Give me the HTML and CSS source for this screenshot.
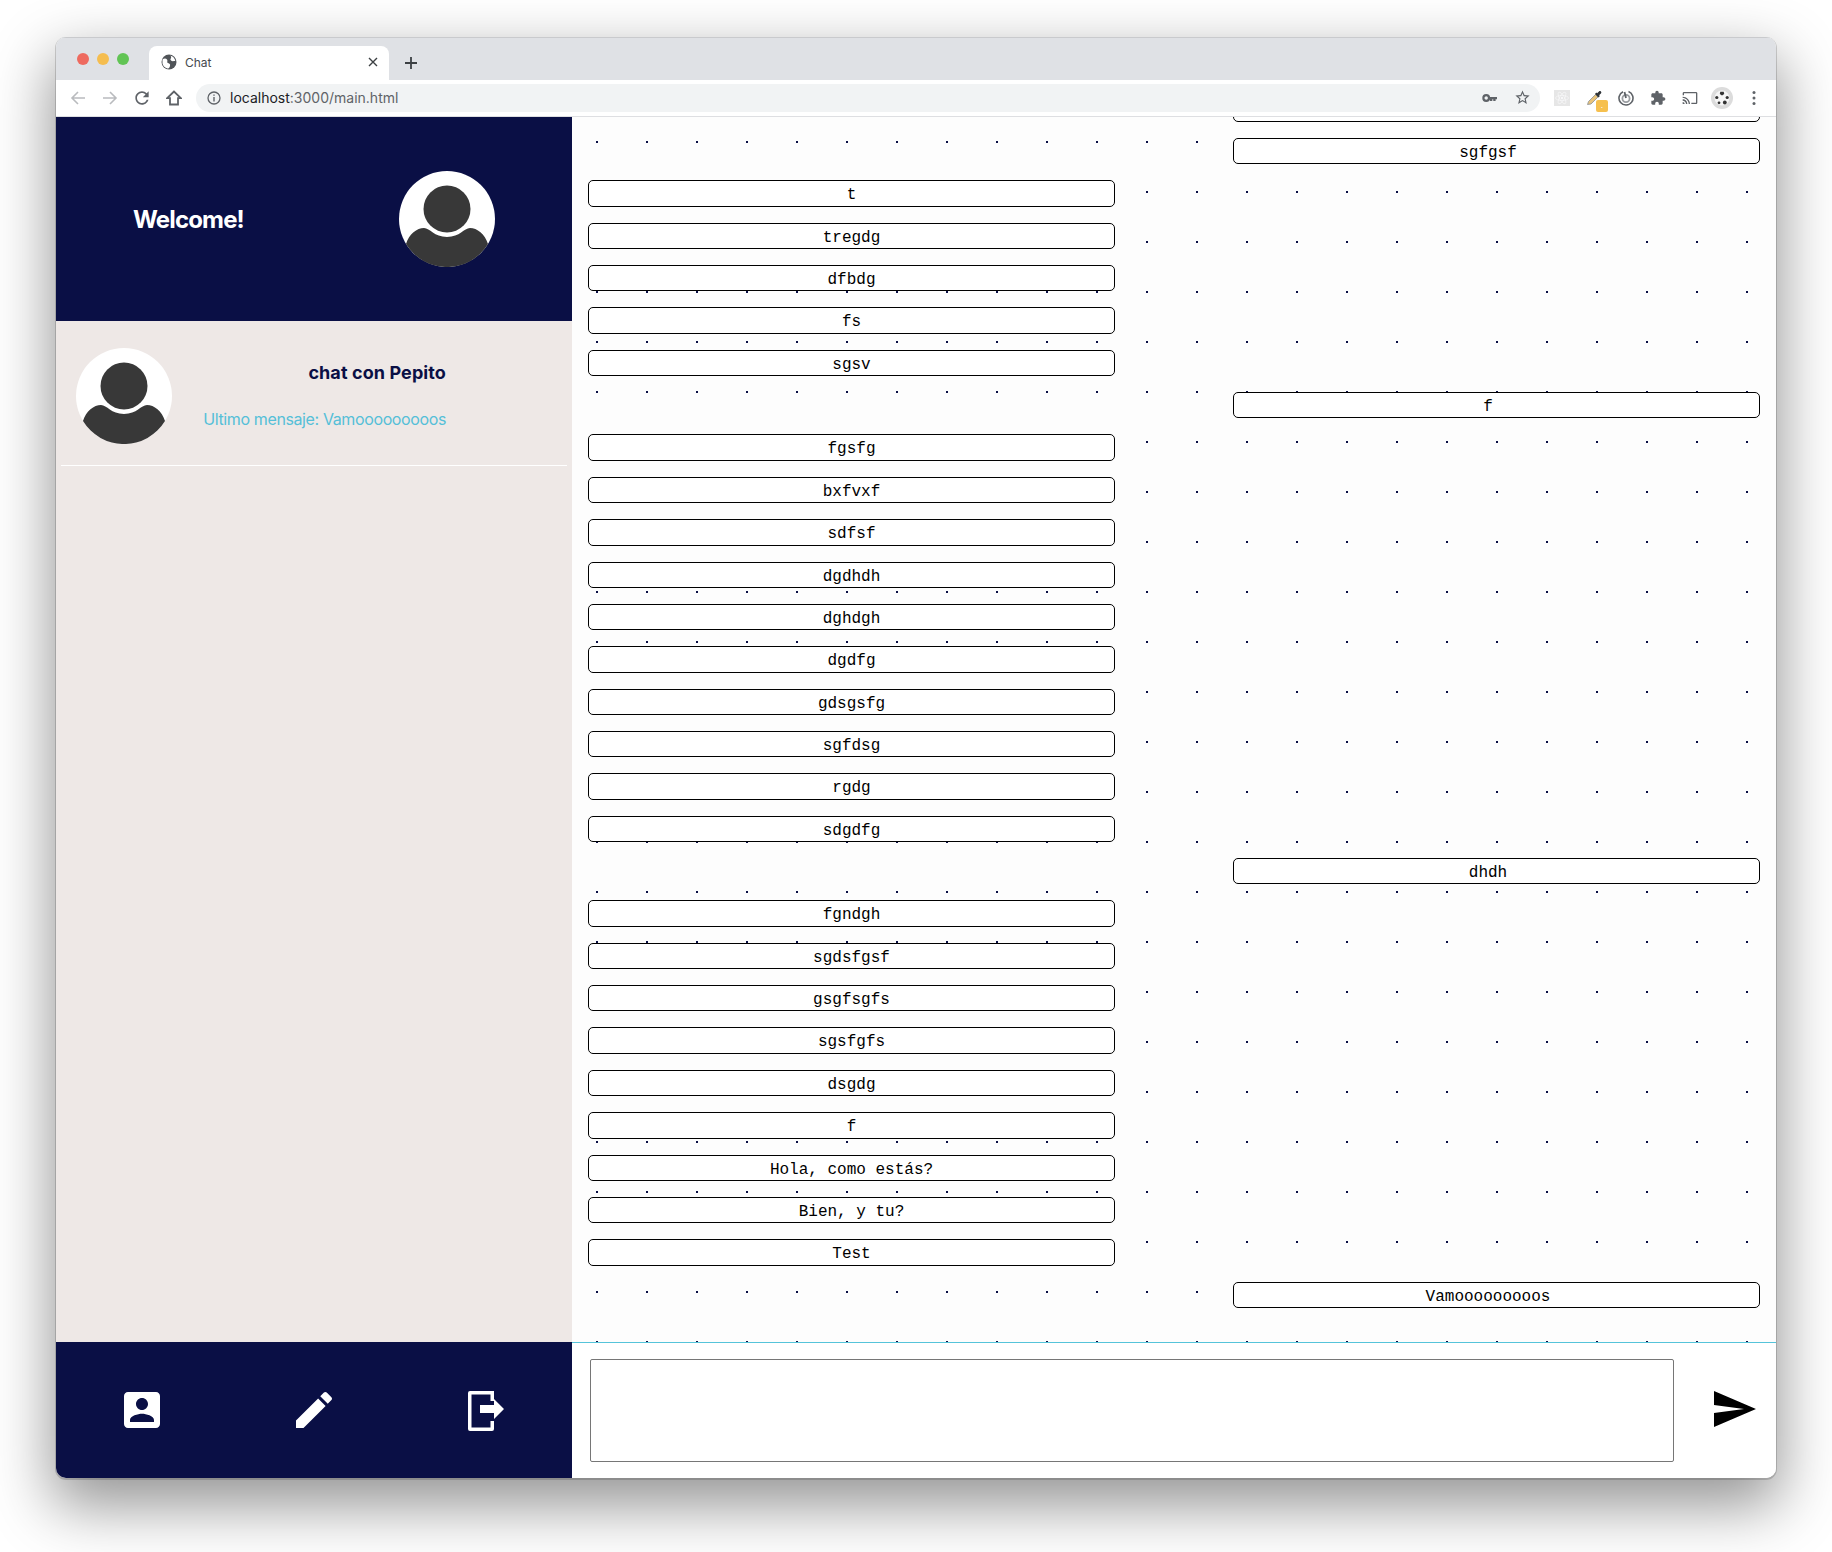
FILE: index.html
```html
<!DOCTYPE html>
<html lang="es">
<head>
<meta charset="utf-8">
<title>Chat</title>
<link rel="stylesheet" href="styles.css">
</head>
<body>
<div class="window">
  <div class="tabstrip">
    <div class="lights"><span class="light red"></span><span class="light yellow"></span><span class="light green"></span></div>
    <div class="tab">
      <svg class="favicon" viewBox="0 0 16 16"><circle cx="8" cy="8" r="7.500" fill="#505458"/><path d="M1.500 5.500C3 4 5 4 6 5.500s-.5 3 1 3.500 2.500 1 2 3-1.500 2.500-2.500 2.500C4 14 2 12 1.500 9.500zM9 1.500c1 .5 1.500 1.500 1 2.500S9 5.500 10 6.500s2.500.5 4.300.5C14 4.500 12 2 9 1.500z" fill="#fff"/></svg>
      <span class="tab-title">Chat</span>
      <svg class="tab-close" viewBox="0 0 10 10"><path d="M1 1l8 8M9 1l-8 8" stroke="#3c4043" stroke-width="1.4" fill="none"/></svg>
    </div>
    <svg class="newtab" viewBox="0 0 12 12"><path d="M6 0v12M0 6h12" stroke="#3c4043" stroke-width="1.8" fill="none"/></svg>
  </div>
  <div class="toolbar">
    <svg class="tb-icon" viewBox="0 0 16 16"><path d="M15 8H2M8 2L2 8l6 6" stroke="#b9bbbe" stroke-width="1.6" fill="none"/></svg>
    <svg class="tb-icon" viewBox="0 0 16 16"><path d="M1 8h13M8 2l6 6-6 6" stroke="#b9bbbe" stroke-width="1.6" fill="none"/></svg>
    <svg class="tb-icon" viewBox="0 0 24 24"><path fill="#5f6368" d="M17.65 6.35C16.2 4.9 14.21 4 12 4c-4.42 0-7.99 3.58-7.99 8s3.57 8 7.99 8c3.73 0 6.84-2.55 7.73-6h-2.08c-.82 2.33-3.04 4-5.65 4-3.31 0-6-2.69-6-6s2.69-6 6-6c1.66 0 3.14.69 4.22 1.78L13 11h7V4l-2.35 2.35z"/></svg>
    <svg class="tb-icon" viewBox="0 0 16 16"><path d="M8 1.5L1.2 8.200H4v6.300h8V8.200h2.800z" stroke="#5f6368" stroke-width="1.800" fill="none"/></svg>
    <div class="omnibox">
      <svg class="info" viewBox="0 0 14 14"><circle cx="7" cy="7" r="6" fill="none" stroke="#5f6368" stroke-width="1.3"/><path d="M7 6v4.5M7 3.4v1.4" stroke="#5f6368" stroke-width="1.4"/></svg>
      <span class="url"><span class="url-host">localhost</span>:3000/main.html</span>
      <span class="omni-space"></span>
      <svg class="omni-key" viewBox="0 0 16 10"><circle cx="4.5" cy="5" r="3" fill="none" stroke="#5f6368" stroke-width="2.4"/><path d="M7 3.8h9v2.4h-1.5v2H12v-2h-1v2H8.5V6.2H7z" fill="#5f6368"/></svg>
      <svg class="omni-star" viewBox="0 0 24 24"><path fill="#5f6368" d="M22 9.24l-7.19-.62L12 2 9.19 8.63 2 9.24l5.46 4.73L5.82 21 12 17.27 18.18 21l-1.63-7.03L22 9.24zM12 15.4l-3.76 2.27 1-4.28-3.32-2.88 4.38-.38L12 6.1l1.71 4.04 4.38.38-3.32 2.88 1 4.28L12 15.4z"/></svg>
    </div>
    <div class="ext ext-react">
      <svg viewBox="0 0 16 16"><g fill="none" stroke="#f7f7f8" stroke-width=".7"><ellipse cx="8" cy="8" rx="6.5" ry="2.5"/><ellipse cx="8" cy="8" rx="6.5" ry="2.5" transform="rotate(60 8 8)"/><ellipse cx="8" cy="8" rx="6.5" ry="2.5" transform="rotate(120 8 8)"/></g><circle cx="8" cy="8" r="1.2" fill="#f7f7f8"/></svg>
    </div>
    <div class="ext ext-drop">
      <svg viewBox="0 0 16 16"><path d="M.5 14.500l1-3L8.500 4.500l2.500 2.500-7 7z" fill="#e8c37a" stroke="#8a8f96" stroke-width=".8"/><path d="M8 4l3.500 3.500 1.400-1.400-.8-.8 1.800-1.900c.6-.6.6-1.300 0-1.900s-1.300-.6-1.900 0l-1.900 1.800-.8-.8z" fill="#2f3337"/></svg>
      <span class="ext-badge">.</span>
    </div>
    <div class="ext ext-radar">
      <svg viewBox="0 0 16 16"><path d="M10.500 1.500A7 7 0 1 1 5 1.700" fill="none" stroke="#5f6368" stroke-width="1.600"/><circle cx="8" cy="8.500" r="3.600" fill="none" stroke="#9a9da1" stroke-width="1.800"/><path d="M6.500 2l1.500 6" stroke="#5f6368" stroke-width="1.800"/></svg>
    </div>
    <div class="ext">
      <svg viewBox="0 0 24 24"><path fill="#5f6368" d="M20.500 11H19V7c0-1.100-.9-2-2-2h-4V3.500C13 2.120 11.880 1 10.500 1S8 2.120 8 3.500V5H4c-1.100 0-1.990.9-1.990 2v3.800H3.500c1.490 0 2.700 1.210 2.700 2.700s-1.210 2.700-2.700 2.700H2V20c0 1.100.9 2 2 2h3.800v-1.500c0-1.490 1.210-2.700 2.700-2.700 1.490 0 2.700 1.210 2.700 2.700V22H17c1.100 0 2-.9 2-2v-4h1.500c1.380 0 2.500-1.120 2.500-2.500S21.880 11 20.500 11z"/></svg>
    </div>
    <div class="ext">
      <svg viewBox="0 0 24 24"><path fill="#5f6368" d="M21 3H3c-1.100 0-2 .9-2 2v3h2V5h18v14h-7v2h7c1.100 0 2-.9 2-2V5c0-1.100-.9-2-2-2zM1 18v3h3c0-1.660-1.340-3-3-3zm0-4v2c2.760 0 5 2.240 5 5h2c0-3.870-3.130-7-7-7zm0-4v2c4.970 0 9 4.030 9 9h2c0-6.080-4.930-11-11-11z"/></svg>
    </div>
    <div class="profile">
      <svg viewBox="0 0 16 16"><circle cx="8" cy="8" r="7.500" fill="#f6f6f6"/><path d="M6.300 1.800h3.400l.5 2.200-2.200 1.500L5.800 4z" fill="#333"/><circle cx="2.800" cy="7.500" r="1.600" fill="#333"/><circle cx="13.200" cy="7.500" r="1.600" fill="#333"/><circle cx="5" cy="12.800" r="1.400" fill="#333"/><circle cx="10.800" cy="12.500" r="1.900" fill="#333"/></svg>
    </div>
    <svg class="kebab" viewBox="0 0 4 16"><circle cx="2" cy="2.500" r="1.500" fill="#5f6368"/><circle cx="2" cy="8" r="1.500" fill="#5f6368"/><circle cx="2" cy="13.500" r="1.500" fill="#5f6368"/></svg>
  </div>

  <div class="app">
    <aside class="sidebar">
      <header class="side-head">
        <h1 class="welcome">Welcome!</h1>
        <svg class="avatar" viewBox="0 0 96 96"><circle cx="48" cy="48" r="48" fill="#fff"/><circle cx="48" cy="38" r="23.500" fill="#383838"/><path d="M7 73c3-10 11-16 18-16 6 0 10 9 23 9s17-9 23-9c7 0 15 6 18 16A48 48 0 0 1 7 73z" fill="#383838"/></svg>
      </header>
      <div class="side-list">
        <div class="chat-item">
          <svg class="avatar" viewBox="0 0 96 96"><circle cx="48" cy="48" r="48" fill="#fff"/><circle cx="48" cy="38" r="23.500" fill="#383838"/><path d="M7 73c3-10 11-16 18-16 6 0 10 9 23 9s17-9 23-9c7 0 15 6 18 16A48 48 0 0 1 7 73z" fill="#383838"/></svg>
          <div class="chat-text">
            <div class="chat-name">chat con Pepito</div>
            <div class="chat-last">Ultimo mensaje: Vamooooooooos</div>
          </div>
        </div>
      </div>
      <footer class="side-foot">
        <svg class="foot-icon" viewBox="0 0 24 24"><path fill="#fff" d="M3 5v14c0 1.100.89 2 2 2h14c1.100 0 2-.9 2-2V5c0-1.100-.9-2-2-2H5c-1.110 0-2 .9-2 2zm12 4c0 1.660-1.340 3-3 3s-3-1.340-3-3 1.340-3 3-3 3 1.340 3 3zm-9 8c0-2 4-3.100 6-3.100s6 1.100 6 3.100v1H6v-1z"/></svg>
        <svg class="foot-icon" viewBox="0 0 24 24"><path fill="#fff" d="M3 17.250V21h3.750L17.810 9.940l-3.750-3.750L3 17.250zM20.710 7.040c.39-.39.39-1.020 0-1.410l-2.340-2.340c-.39-.39-1.020-.39-1.410 0l-1.830 1.830 3.750 3.750 1.830-1.830z"/></svg>
        <svg class="foot-icon" viewBox="0 0 48 48"><path fill="#fff" d="M8 6a2 2 0 0 0-2 2v36a2 2 0 0 0 2 2h22a2 2 0 0 0 2-2v-8h-3.500v6.500h-19v-33h19V16H32V6zM18 20h14v-6l10 10-10 10v-6H18z" transform="translate(0 -1)"/></svg>
      </footer>
    </aside>
    <main class="chat">
      <div class="messages">
        <div class="msg mine"><span class="bubble"></span></div>
        <div class="msg mine"><span class="bubble">sgfgsf</span></div>
        <div class="msg"><span class="bubble">t</span></div>
        <div class="msg"><span class="bubble">tregdg</span></div>
        <div class="msg"><span class="bubble">dfbdg</span></div>
        <div class="msg"><span class="bubble">fs</span></div>
        <div class="msg"><span class="bubble">sgsv</span></div>
        <div class="msg mine"><span class="bubble">f</span></div>
        <div class="msg"><span class="bubble">fgsfg</span></div>
        <div class="msg"><span class="bubble">bxfvxf</span></div>
        <div class="msg"><span class="bubble">sdfsf</span></div>
        <div class="msg"><span class="bubble">dgdhdh</span></div>
        <div class="msg"><span class="bubble">dghdgh</span></div>
        <div class="msg"><span class="bubble">dgdfg</span></div>
        <div class="msg"><span class="bubble">gdsgsfg</span></div>
        <div class="msg"><span class="bubble">sgfdsg</span></div>
        <div class="msg"><span class="bubble">rgdg</span></div>
        <div class="msg"><span class="bubble">sdgdfg</span></div>
        <div class="msg mine"><span class="bubble">dhdh</span></div>
        <div class="msg"><span class="bubble">fgndgh</span></div>
        <div class="msg"><span class="bubble">sgdsfgsf</span></div>
        <div class="msg"><span class="bubble">gsgfsgfs</span></div>
        <div class="msg"><span class="bubble">sgsfgfs</span></div>
        <div class="msg"><span class="bubble">dsgdg</span></div>
        <div class="msg"><span class="bubble">f</span></div>
        <div class="msg"><span class="bubble">Hola, como estás?</span></div>
        <div class="msg"><span class="bubble">Bien, y tu?</span></div>
        <div class="msg"><span class="bubble">Test</span></div>
        <div class="msg mine"><span class="bubble">Vamooooooooos</span></div>
      </div>
      <div class="composer">
        <textarea class="input"></textarea>
        <svg class="send" viewBox="0 0 24 24"><path fill="#000" d="M2.010 21L23 12 2.010 3 2 10l15 2-15 2z"/></svg>
      </div>
    </main>
  </div>
</div>
</body>
</html>
```

FILE: styles.css
```css
* { box-sizing: border-box; }
html, body { margin: 0; height: 100%; }
body {
  width: 1832px;
  height: 1552px;
  background: #fff;
  padding: 37px 56px 0;
  overflow: hidden;
  font-family: "Inter", "Liberation Sans", sans-serif;
}
.window {
  width: 1720px;
  height: 1441px;
  border-radius: 10px;
  overflow: hidden;
  display: flex;
  flex-direction: column;
  background: #fff;
  box-shadow: 0 1px 0 1px rgba(0,0,0,.16), 0 24px 60px 4px rgba(0,0,0,.42);
}

.tabstrip {
  height: 43px;
  flex: none;
  background: #dfe1e5;
  border-top: 1px solid #c9cacd;
  display: flex;
  align-items: flex-end;
}
.lights { width: 93px; height: 42px; display: flex; gap: 8px; padding: 15px 0 0 21px; }
.light { width: 12px; height: 12px; border-radius: 50%; }
.red { background: #ee6a5f; }
.yellow { background: #f5bd4f; }
.green { background: #61c454; }
.tab {
  width: 240px;
  height: 34px;
  background: #fff;
  border-radius: 8px 8px 0 0;
  display: flex;
  align-items: center;
  padding: 0 11px 2px 12px;
}
.favicon { width: 16px; height: 16px; margin-right: 8px; flex: none; }
.tab-title { font-size: 12px; color: #45494e; flex: 1; }
.tab-close { width: 10px; height: 10px; flex: none; }
.newtab { width: 12px; height: 12px; margin: 0 0 11px 16px; }

.toolbar {
  height: 37px;
  flex: none;
  background: #fff;
  border-bottom: 1px solid #dedfe2;
  display: flex;
  align-items: center;
  padding: 0 0 1px 14px;
}
.tb-icon { width: 16px; height: 16px; margin-right: 16px; flex: none; }
.tb-icon:nth-child(3) { width: 20px; height: 20px; margin: 0 14px 0 -2px; }
.omnibox {
  width: 1344px;
  height: 28px;
  margin-left: -2px;
  background: #f1f3f4;
  border-radius: 14px;
  display: flex;
  align-items: center;
  padding: 0 9px 0 11px;
}
.info { width: 14px; height: 14px; margin-right: 9px; flex: none; }
.url { font-size: 14px; color: #5f6368; }
.url-host { color: #202124; }
.omni-space { flex: 1; }
.omni-key { width: 15px; height: 10px; margin-right: 17px; }
.omni-star { width: 17px; height: 17px; }
.ext { width: 16px; height: 16px; margin-left: 16px; position: relative; flex: none; }
.ext svg { width: 16px; height: 16px; display: block; }
.ext-react { background: #e6e6e6; margin-left: 14px; }
.ext-drop { margin-left: 17px; }
.ext-radar { margin-left: 15px; }
.ext-badge {
  position: absolute;
  left: 9px;
  top: 10px;
  width: 12px;
  height: 12px;
  background: #f6c04e;
  border-radius: 2px;
  color: #fff;
  font-size: 8px;
  line-height: 10px;
  text-align: center;
}
.profile {
  width: 22px;
  height: 22px;
  margin-left: 13px;
  border-radius: 50%;
  background: #dcdcdc;
  padding: 3px;
  flex: none;
}
.profile svg { width: 16px; height: 16px; display: block; }
.kebab { width: 4px; height: 16px; margin-left: 19px; }

.app { flex: 1; min-height: 0; display: flex; }
.sidebar {
  width: 516px;
  flex: none;
  display: flex;
  flex-direction: column;
  background: #eee8e6;
}
.side-head {
  height: 204px;
  flex: none;
  background: #0a0f45;
  display: flex;
  align-items: center;
  justify-content: space-between;
  padding: 0 77px;
}
.welcome { margin: 0; font-size: 24px; font-weight: 700; color: #fff; letter-spacing: -.85px; }
.avatar { width: 96px; height: 96px; flex: none; display: block; }
.side-list { flex: 1; padding: 27px 5px 0; }
.chat-item {
  display: flex;
  height: 118px;
  padding-left: 15px;
  border-bottom: 1px solid #fff;
}
.chat-text {
  flex: 1;
  padding: 12px 121px 0 0;
  text-align: right;
}
.chat-name { font-size: 18px; font-weight: 700; color: #0a0f45; line-height: 26px; letter-spacing: .1px; }
.chat-last { margin-top: 20px; font-size: 16px; color: #55bfd8; line-height: 26px; letter-spacing: -.38px; }
.side-foot {
  height: 136px;
  flex: none;
  background: #0a0f45;
  display: grid;
  grid-template-columns: repeat(3, 1fr);
  align-items: center;
  justify-items: center;
}
.foot-icon { width: 48px; height: 48px; display: block; }

.chat { flex: 1; min-width: 0; display: flex; flex-direction: column; background: #fff; }
.messages {
  flex: 1;
  min-height: 0;
  overflow: hidden;
  display: flex;
  flex-direction: column;
  justify-content: flex-end;
  padding: 0 16px 34px;
  background-color: #fdfdfd;
  background-image: radial-gradient(#0a0f45 1px, transparent 1px);
  background-size: 50px 50px;
}
.msg { flex: none; display: flex; margin-top: 16px; justify-content: flex-start; }
.msg.mine { justify-content: flex-end; }
.bubble {
  width: 527px;
  height: 26.37px;
  border: 1.4px solid #000;
  border-radius: 5px;
  background: #fff;
  font-family: "Liberation Mono", monospace;
  font-size: 16px;
  line-height: 28.2px;
  text-align: center;
  color: #000;
}
.mine .bubble { padding-right: 17px; }
.composer {
  height: 136px;
  flex: none;
  border-top: 1px solid #55c4da;
  display: flex;
  align-items: center;
  padding-left: 18px;
}
.input {
  width: 1084px;
  height: 103px;
  border: 1px solid #767676;
  border-radius: 2px;
  background: #fff;
  resize: none;
  padding: 2px;
}
.send { width: 48px; height: 48px; margin: -3px 0 0 36px; display: block; }
```
